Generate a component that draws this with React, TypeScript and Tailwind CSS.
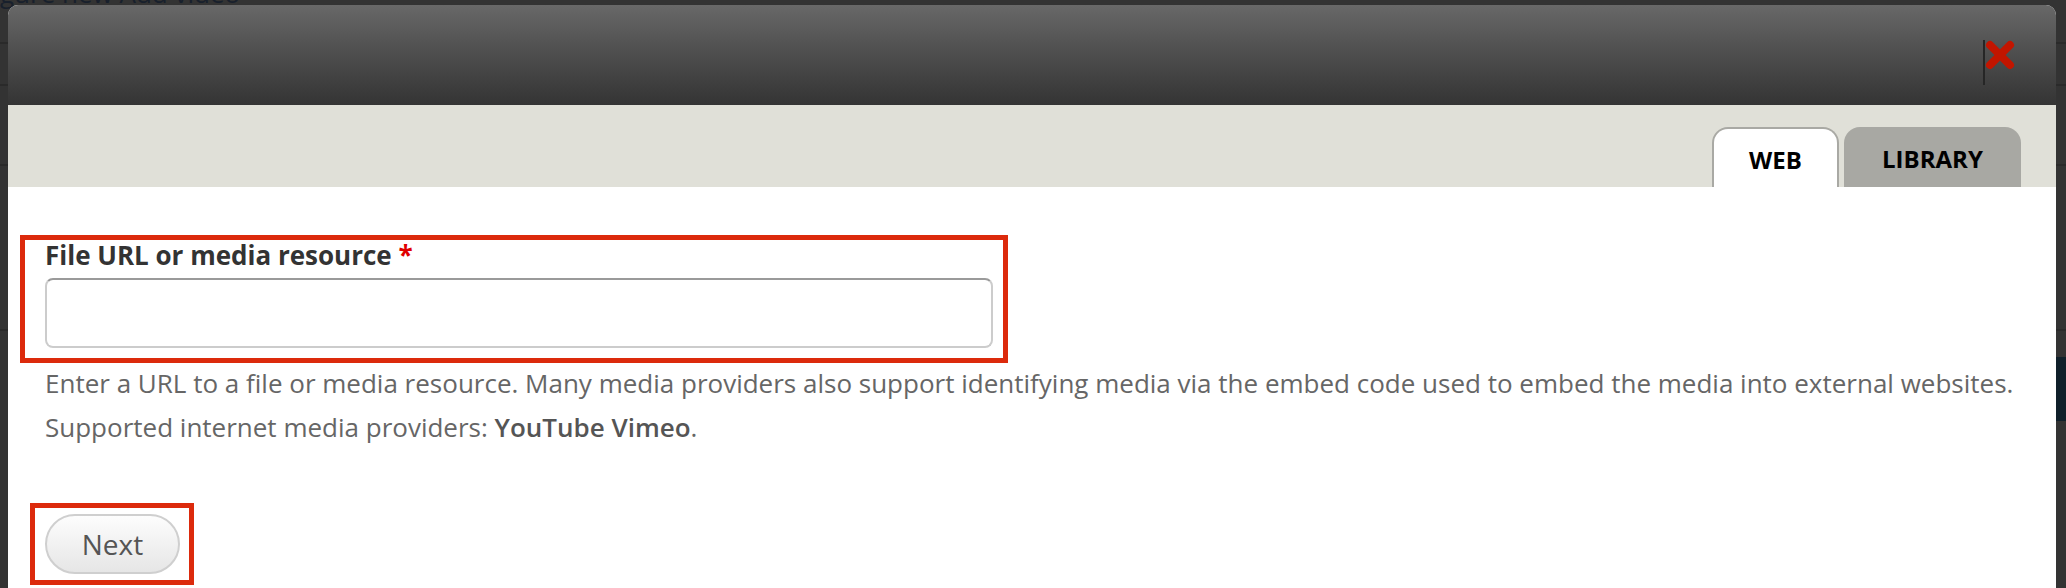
const font = { fontFamily: '"Open Sans", "Liberation Sans", sans-serif' };

function CloseIcon() {
  return (
    <svg width="30" height="30" viewBox="0 0 30 30" className="block">
      <path d="M5 5 L25 25 M25 5 L5 25" stroke="#c21500" strokeWidth="8" strokeLinecap="round" />
    </svg>
  );
}

function Backdrop() {
  return (
    <div className="flex h-[588px] flex-col bg-[#333333]">
      <div className="-mt-[20px] h-[27px] text-[26px] leading-[27px] text-[#18202c]">
        gure new Add video
      </div>
      <div className="mt-[35px] h-[2px] bg-[#2a2a2a]" />
      <div className="mt-[40px] h-[2px] bg-[#2a2a2a]" />
      <div className="mt-[78px] h-[2px] bg-[#2a2a2a]" />
      <div className="mt-[163px] h-[2px] bg-[#2a2a2a]" />
      <div className="mt-[26px] flex h-[64px] justify-end">
        <div className="w-[10px] bg-[#10202a]" />
      </div>
    </div>
  );
}

export default function App() {
  return (
    <div className="relative h-[588px] w-[2066px] overflow-hidden" style={font}>
      <Backdrop />

      <div className="absolute left-[8px] top-[5px] h-[600px] w-[2048px] overflow-hidden rounded-t-[10px] bg-white">
        <div className="flex h-[100px] items-start justify-end bg-gradient-to-b from-[#686868] to-[#343434] pr-[41px] pt-[35px]">
          <button className="flex items-start border-l-2 border-[#262626]">
            <div className="h-[45px]" />
            <CloseIcon />
          </button>
        </div>

        <div className="flex h-[82px] items-end justify-end gap-[5px] bg-[#e0e0d8] pr-[35px]">
          <div className="flex h-[60px] w-[127px] items-center justify-center rounded-t-[16px] border-2 border-b-0 border-[#a9a9a4] bg-white pt-[4px] text-[24px] font-bold text-black">
            WEB
          </div>
          <div className="flex h-[60px] w-[177px] items-center justify-center rounded-t-[16px] bg-[#a8a8a3] pt-[4px] text-[24px] font-bold text-black">
            LIBRARY
          </div>
        </div>

        <div className="px-[37px] pt-[50px]">
          <label className="block text-[26px] font-bold leading-[36px] text-[#333333]">
            File URL or media resource <span className="text-[#e00000]">*</span>
          </label>
          <input
            type="text"
            className="mt-[5px] block h-[70px] w-[948px] rounded-[8px] border-2 border-[#cccccc] border-t-[#9a9a9a] bg-white px-3 text-[26px] outline-none"
          />
          <div className="mt-[13px] text-[26px] leading-[44px] text-[#666666]">
            <div className="whitespace-nowrap">
              Enter a URL to a file or media resource. Many media providers also support identifying media via the embed code used to embed the media into external websites.
            </div>
            <div className="whitespace-nowrap">
              Supported internet media providers: <span className="font-semibold text-[#555555]">YouTube Vimeo</span>.
            </div>
          </div>
          <button className="mt-[65px] flex h-[60px] w-[135px] items-center justify-center rounded-full border-2 border-[#cfcfcf] bg-gradient-to-b from-[#fdfdfd] to-[#e6e6e6] text-[28px] text-[#555555]">
            Next
          </button>
        </div>
      </div>

      <div className="pointer-events-none absolute left-[20px] top-[235px] h-[128px] w-[988px] border-[5px] border-[#dc2a0c]" />
      <div className="pointer-events-none absolute left-[30px] top-[503px] h-[82px] w-[164px] border-[5px] border-[#dc2a0c]" />
    </div>
  );
}
